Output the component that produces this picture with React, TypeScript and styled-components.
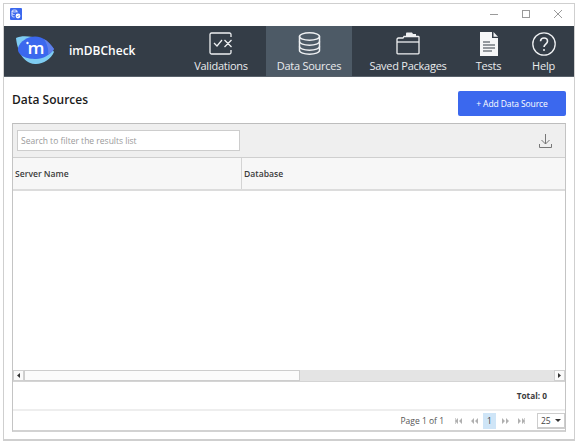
import React from "react"
import styled, { createGlobalStyle } from "styled-components"

const GlobalStyle = createGlobalStyle`
  html, body {
    margin: 0;
    padding: 0;
    background: #fff;
    font-family: "Open Sans", "Noto Sans", "Liberation Sans", sans-serif;
  }
  * { box-sizing: border-box; }
`

const Window = styled.div`
  margin: 3px 0 0 3px;
  width: 572px;
  height: 438px;
  border: 1px solid #cfcfcf;
  border-bottom-width: 2px;
  display: flex;
  flex-direction: column;
  background: #fff;
`

const TitleBar = styled.div`
  height: 22px;
  flex: none;
  display: flex;
  align-items: center;
  justify-content: space-between;
  padding: 0 12px 2px 6px;
`

const WindowControls = styled.div`
  display: flex;
  gap: 24px;
  align-items: center;
`

const Nav = styled.div`
  height: 51px;
  flex: none;
  display: flex;
  background: #343d47;
  border-bottom: 1px solid #59626b;
`

const Brand = styled.div`
  width: 172px;
  flex: none;
  display: flex;
  align-items: center;
  gap: 14px;
  padding: 0 0 2px 11px;
  color: #fff;
  font-size: 12px;
  font-weight: 600;
`

const Tab = styled.div<{ $width: number; $active?: boolean }>`
  width: ${p => p.$width}px;
  flex: none;
  display: flex;
  flex-direction: column;
  align-items: center;
  padding-top: 6px;
  color: #e9ebed;
  font-size: 11px;
  letter-spacing: -0.25px;
  line-height: 16px;
  white-space: nowrap;
  background: ${p => (p.$active ? "#4d5a66" : "transparent")};
`

const TabIcon = styled.div`
  height: 24px;
  margin-bottom: 2px;
  flex: none;

  svg {
    display: block;
  }
`

const Content = styled.div`
  flex: 1;
  min-height: 0;
  display: flex;
  flex-direction: column;
  padding: 14px 8px 7px 8px;
`

const HeaderRow = styled.div`
  height: 25px;
  flex: none;
  display: flex;
  align-items: center;
  justify-content: space-between;
  margin-bottom: 7px;
`

const Heading = styled.h1`
  margin: 0 0 9px;
  font-size: 12px;
  font-weight: 600;
  color: #1b1b1b;
`

const AddButton = styled.button`
  width: 108px;
  height: 25px;
  border: 0;
  border-radius: 2px;
  padding: 0;
  background: #3b68ee;
  color: #fff;
  font: inherit;
  font-size: 8.5px;
  letter-spacing: -0.1px;
`

const Grid = styled.div`
  flex: 1;
  min-height: 0;
  display: flex;
  flex-direction: column;
  border: 1px solid #c4c4c4;
  border-top-color: #bdbdbd;
  border-bottom: 2px solid #d2d2d2;
`

const Toolbar = styled.div`
  height: 34px;
  flex: none;
  display: flex;
  align-items: center;
  justify-content: space-between;
  padding: 0 13px 0 4px;
  background: #efefef;
  border-bottom: 1px solid #cfcfcf;
`

const SearchBox = styled.div`
  width: 223px;
  height: 21px;
  display: flex;
  align-items: center;
  padding-left: 3px;
  background: #fff;
  border: 1px solid #cdcdcd;
  color: #9a9a9a;
  font-size: 8.5px;
`

const ColumnHeader = styled.div`
  height: 33px;
  flex: none;
  display: flex;
  background: #f7f7f7;
  border-bottom: 2px solid #dcdcdc;
`

const ColumnCell = styled.div<{ $width?: number }>`
  ${p => (p.$width ? `width: ${p.$width}px;` : "flex: 1;")}
  display: flex;
  align-items: center;
  padding-left: 2px;
  font-size: 8.6px;
  font-weight: 600;
  color: #3c3c3c;
  border-right: ${p => (p.$width ? "1px solid #d4d4d4" : "0")};
`

const GridBody = styled.div`
  flex: 1;
  min-height: 0;
  background: #fff;
`

const ScrollBar = styled.div`
  height: 12px;
  flex: none;
  display: flex;
  background: #e4e4e4;
  border-bottom: 1px solid #d4d4d4;
`

const ScrollButton = styled.div`
  width: 11px;
  display: flex;
  align-items: center;
  justify-content: center;
  background: #fafafa;
  border: 1px solid #d0d0d0;
`

const ScrollThumb = styled.div`
  width: 276px;
  background: #fbfbfb;
  border: 1px solid #cdcdcd;
`

const ScrollTrack = styled.div`
  flex: 1;
`

const TotalRow = styled.div`
  height: 29px;
  flex: none;
  display: flex;
  align-items: center;
  justify-content: flex-end;
  padding-right: 18px;
  font-size: 8.3px;
  font-weight: 700;
  color: #3c3c3c;
  border-bottom: 2px solid #eeeeee;
`

const Pager = styled.div`
  height: 19px;
  flex: none;
  display: flex;
  align-items: center;
  justify-content: flex-end;
  font-size: 8.5px;
  color: #555;
`

const PageInfo = styled.span`
  margin-right: 6px;
`

const PageIcon = styled.span`
  width: 16px;
  display: flex;
  justify-content: center;
`

const PageNumber = styled.span`
  width: 13px;
  height: 16px;
  margin: 0 1px;
  display: flex;
  align-items: center;
  justify-content: center;
  background: #cfe5f7;
  color: #444;
`

const PageSize = styled.div`
  width: 28px;
  height: 16px;
  margin-left: 8px;
  display: flex;
  align-items: center;
  justify-content: space-between;
  padding: 0 3px;
  border: 1px solid #cdcdcd;
  border-bottom-width: 2px;
  color: #444;
`

const Caret = styled.span`
  width: 0;
  height: 0;
  border-left: 3px solid transparent;
  border-right: 3px solid transparent;
  border-top: 3px solid #333;
`

const AppIcon = () => (
  <svg width="12" height="12" viewBox="0 0 12 12">
    <rect width="12" height="12" rx="1" fill="#3b68ee" />
    <ellipse cx="4.500" cy="3" rx="2.600" ry="1" fill="none" stroke="#fff" strokeWidth="0.8" />
    <path d="M2 3v5c0 .6 1 1 2.500 1M7 3v1.500M2 5.500c0 .6 1 1 2.500 1" fill="none" stroke="#fff" strokeWidth="0.8" />
    <circle cx="8" cy="8" r="2.400" fill="#fff" />
    <path d="M6.900 8l.8.8 1.400-1.500" fill="none" stroke="#3b68ee" strokeWidth="0.7" />
  </svg>
)

const Logo = () => (
  <svg width="40" height="30" viewBox="0 0 40 30">
    <path d="M1 3C2 12 6 28 20 29c8 .5 16-5 19-12C34 8 26 3 18 2 11 1 5 1 1 3z" fill="#7fcdf2" />
    <path d="M3 13C5 6 13 1.500 20 1.500 28 1.500 35 8 39 14 35 20 28 24 21 24 12 24 2 21 3 13z" fill="#3b68ee" />
    <path d="M29 4c4 2 7 6 10 10-1 2-3 4-6 6 1-6-1-11-4-16z" fill="#5f80ea" />
    <circle cx="12.500" cy="8" r="1.200" fill="#fff" />
    <text x="12.500" y="19" fontSize="16" fontWeight="600" fill="#fff" fontFamily="Open Sans, sans-serif" textLength="17" lengthAdjust="spacingAndGlyphs">m</text>
  </svg>
)

const ValidationsIcon = () => (
  <svg width="24" height="23" viewBox="0 0 24 23" fill="none" stroke="#eef0f2" strokeWidth="1.300">
    <path d="M22 5V2.500A1.500 1.500 0 0 0 20.500 1H2.500A1.500 1.500 0 0 0 1 2.500v18A1.500 1.500 0 0 0 2.500 22h18a1.500 1.500 0 0 0 1.500-1.500V18" />
    <path d="M5 11l3 3 5-6M15.500 8l7 7M22.500 8l-7 7" />
  </svg>
)

const DatabaseIcon = () => (
  <svg width="23" height="23" viewBox="0 0 23 23" fill="none" stroke="#eef0f2" strokeWidth="1.500">
    <ellipse cx="11.500" cy="4.500" rx="10" ry="3.700" />
    <path d="M1.500 4.500v14c0 2 4.500 3.700 10 3.700s10-1.700 10-3.700v-14" />
    <path d="M1.500 9.500c0 2 4.500 3.700 10 3.700s10-1.700 10-3.700M1.500 14.500c0 2 4.500 3.700 10 3.700s10-1.700 10-3.700" />
  </svg>
)

const PackageIcon = () => (
  <svg width="24" height="23" viewBox="0 0 24 23" fill="none">
    <path d="M1 7.500C1 6.700 1.500 6 2.500 6H7l1-1.500h14.200a.8.8 0 0 1 .8.800V21a.8.8 0 0 1-.8.800H1.800A.8.8 0 0 1 1 21z" stroke="#eef0f2" strokeWidth="1.300" />
    <path d="M1 10h22" stroke="#eef0f2" strokeWidth="1.300" />
    <path d="M10 4.500V1.500C10 1 10.500 .5 11 .5h5l1 1.500h3v2.500z" fill="#eef0f2" />
  </svg>
)

const TestsIcon = () => (
  <svg width="20" height="24" viewBox="0 0 20 24">
    <path d="M1 0h12v6h6v18H1z" fill="#f5f6f7" />
    <path d="M14.500 0L19 4.700h-4.500z" fill="#f5f6f7" />
    <path d="M4 10h7M4 13h12M4 16h12M4 19h9" stroke="#343d47" strokeWidth="1.200" />
  </svg>
)

const HelpIcon = () => (
  <svg width="24" height="24" viewBox="0 0 24 24" fill="none" stroke="#eef0f2" strokeWidth="1.300">
    <circle cx="12" cy="12" r="11.200" />
    <path d="M8.500 9.200C8.700 7 10.200 6 12 6c2 0 3.500 1.300 3.500 3.200 0 2.700-3.500 3-3.500 5.800" strokeWidth="1.600" />
    <circle cx="12" cy="18" r="1" fill="#eef0f2" stroke="none" />
  </svg>
)

const DownloadIcon = () => (
  <svg width="13" height="14" viewBox="0 0 13 14" fill="none" stroke="#777" strokeWidth="1">
    <path d="M6.500 0v10M2.500 6l4 4 4-4M.5 10v3.500h12V10" />
  </svg>
)

const PageArrow = (props: { dir: "left" | "right"; double?: boolean }) => (
  <svg width="7" height="6" viewBox="0 0 7 6" fill="#b0b0b0">
    {props.dir === "left" ? (
      <>
        <path d="M3 0v6L0 3zM7 0v6L4 3z" />
        {props.double && <path d="M0 0h.6v6H0z" />}
      </>
    ) : (
      <>
        <path d="M0 0v6l3-3zM4 0v6l3-3z" />
        {props.double && <path d="M6.400 0H7v6h-.6z" />}
      </>
    )}
  </svg>
)

export default function App() {
  return (
    <>
      <GlobalStyle />
      <Window>
        <TitleBar>
          <AppIcon />
          <WindowControls>
            <svg width="8" height="8" viewBox="0 0 8 8" stroke="#9a9a9a"><path d="M0 4.500h8" /></svg>
            <svg width="8" height="8" viewBox="0 0 8 8" fill="none" stroke="#9a9a9a"><rect x=".5" y=".5" width="7" height="7" /></svg>
            <svg width="8" height="8" viewBox="0 0 8 8" stroke="#9a9a9a"><path d="M0 0l8 8M8 0L0 8" /></svg>
          </WindowControls>
        </TitleBar>
        <Nav>
          <Brand>
            <Logo />
            imDBCheck
          </Brand>
          <Tab $width={90}><TabIcon><ValidationsIcon /></TabIcon>Validations</Tab>
          <Tab $width={86} $active><TabIcon><DatabaseIcon /></TabIcon>Data Sources</Tab>
          <Tab $width={112}><TabIcon><PackageIcon /></TabIcon>Saved Packages</Tab>
          <Tab $width={49}><TabIcon><TestsIcon /></TabIcon>Tests</Tab>
          <Tab $width={61}><TabIcon><HelpIcon /></TabIcon>Help</Tab>
        </Nav>
        <Content>
          <HeaderRow>
            <Heading>Data Sources</Heading>
            <AddButton>+ Add Data Source</AddButton>
          </HeaderRow>
          <Grid>
            <Toolbar>
              <SearchBox>Search to filter the results list</SearchBox>
              <DownloadIcon />
            </Toolbar>
            <ColumnHeader>
              <ColumnCell $width={229}>Server Name</ColumnCell>
              <ColumnCell>Database</ColumnCell>
            </ColumnHeader>
            <GridBody />
            <ScrollBar>
              <ScrollButton><svg width="3" height="5" viewBox="0 0 3 5" fill="#333"><path d="M3 0v5L0 2.500z" /></svg></ScrollButton>
              <ScrollThumb />
              <ScrollTrack />
              <ScrollButton><svg width="3" height="5" viewBox="0 0 3 5" fill="#333"><path d="M0 0v5l3-2.500z" /></svg></ScrollButton>
            </ScrollBar>
            <TotalRow>Total: 0</TotalRow>
            <Pager>
              <PageInfo>Page 1 of 1</PageInfo>
              <PageIcon><PageArrow dir="left" double /></PageIcon>
              <PageIcon><PageArrow dir="left" /></PageIcon>
              <PageNumber>1</PageNumber>
              <PageIcon><PageArrow dir="right" /></PageIcon>
              <PageIcon><PageArrow dir="right" double /></PageIcon>
              <PageSize>25<Caret /></PageSize>
            </Pager>
          </Grid>
        </Content>
      </Window>
    </>
  )
}
